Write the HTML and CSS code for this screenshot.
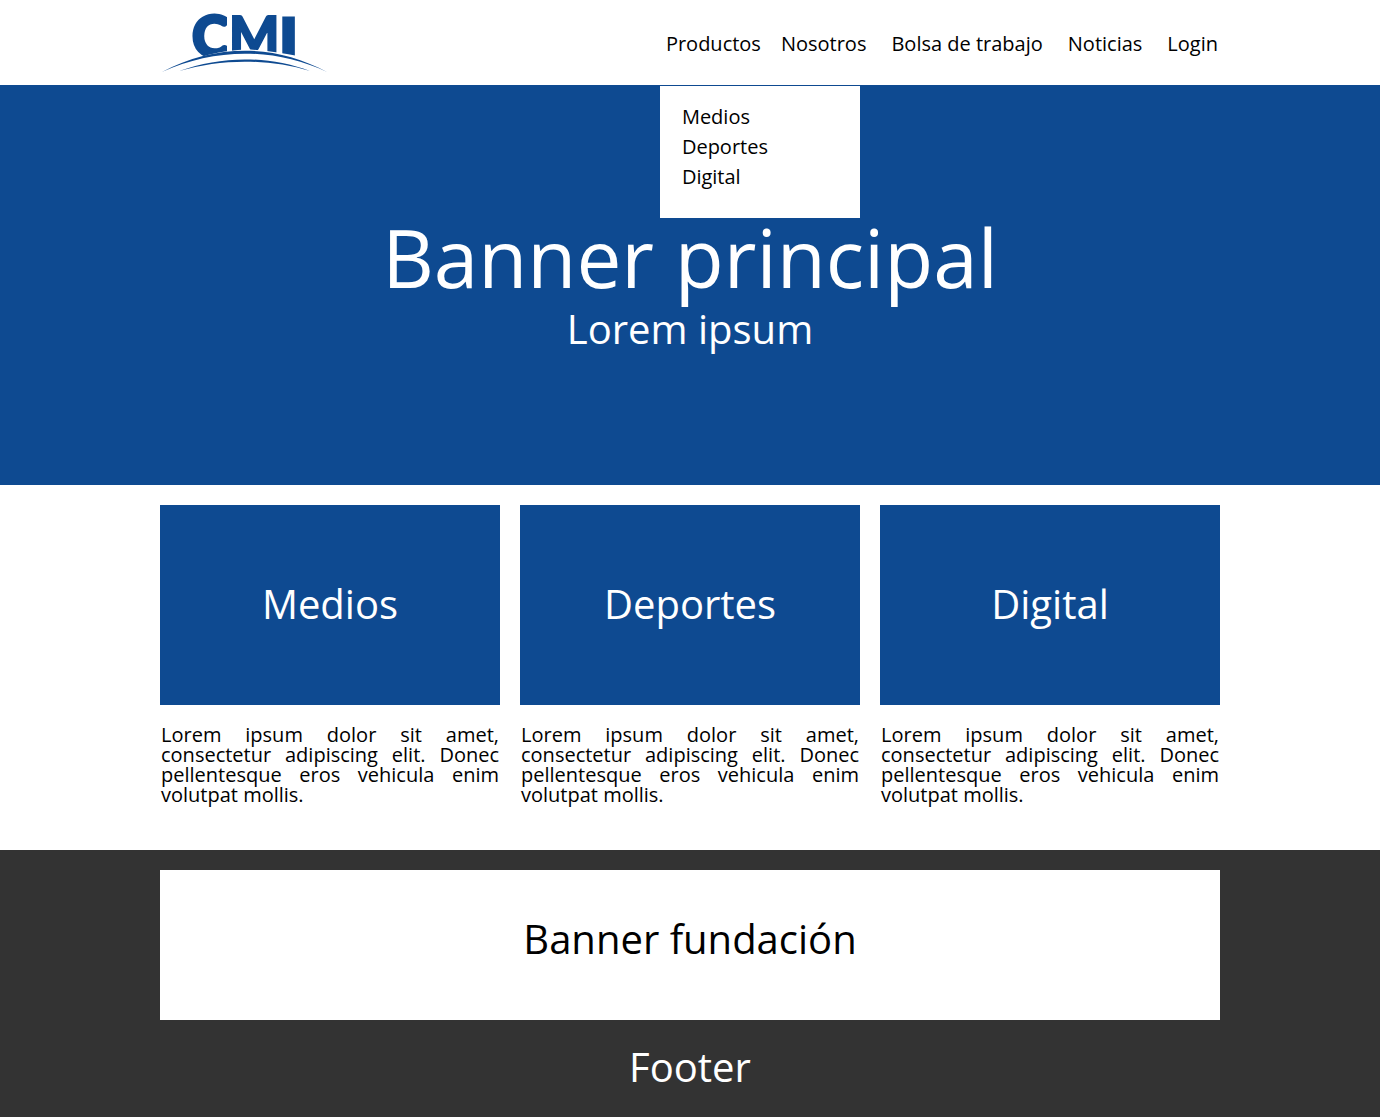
FILE: index.html
```html
<!DOCTYPE html>
<html lang="es">
<head>
<meta charset="utf-8">
<meta name="viewport" content="width=device-width, initial-scale=1">
<title>CMI</title>
<link rel="stylesheet" href="styles.css">
</head>
<body>
<header class="header">
  <div class="container header-row">
    <a class="logo" href="#" aria-label="CMI">
      <svg width="170" height="74" viewBox="160 5 170 74" aria-hidden="true">
        <text class="logo-text" y="56 54 54" x="192 229 281"><tspan class="logo-c">C</tspan><tspan>M</tspan><tspan class="logo-i">I</tspan></text>
        <path fill="#fff" d="M227 10H232V60H227ZM278 10H281V60H278ZM160 74C186 60 206 51 245 48.500C262 48.500 280 52 298 55L330 74Z"/>
        <path d="M162 71C215 42.500 275 42.500 327 71C275 46.500 215 46.500 162 71Z"/>
        <path d="M179 70C222 54.500 268 54.500 310 70C268 57.500 222 57.500 179 70Z"/>
      </svg>
    </a>
    <nav class="nav">
      <ul class="menu">
        <li class="menu-group">
          <a href="#productos">Productos</a>
          <ul class="submenu">
            <li><a href="#medios">Medios</a></li>
            <li><a href="#deportes">Deportes</a></li>
            <li><a href="#digital">Digital</a></li>
          </ul>
        </li>
        <li><a href="#nosotros">Nosotros</a></li>
        <li><a href="#bolsa">Bolsa de trabajo</a></li>
        <li><a href="#noticias">Noticias</a></li>
        <li><a href="#login">Login</a></li>
      </ul>
    </nav>
  </div>
</header>
<main>
  <section class="hero" id="productos">
    <h1>Banner principal</h1>
    <p class="title">Lorem ipsum</p>
  </section>
  <section class="container cards">
    <article id="medios">
      <h2 class="card-banner title">Medios</h2>
      <p class="card-text">Lorem ipsum dolor sit amet, consectetur adipiscing elit. Donec pellentesque eros vehicula enim volutpat mollis.</p>
    </article>
    <article id="deportes">
      <h2 class="card-banner title">Deportes</h2>
      <p class="card-text">Lorem ipsum dolor sit amet, consectetur adipiscing elit. Donec pellentesque eros vehicula enim volutpat mollis.</p>
    </article>
    <article id="digital">
      <h2 class="card-banner title">Digital</h2>
      <p class="card-text">Lorem ipsum dolor sit amet, consectetur adipiscing elit. Donec pellentesque eros vehicula enim volutpat mollis.</p>
    </article>
  </section>
</main>
<footer class="footer">
  <div class="container">
    <h2 class="foundation title">Banner fundación</h2>
    <p class="footer-text title">Footer</p>
  </div>
</footer>
</body>
</html>
```
FILE: styles.css
```css
* {
  box-sizing: border-box;
}

body {
  display: flex;
  flex-direction: column;
  min-height: 100vh;
  margin: 0;
  background: #fff;
  color: #000;
  font: 20px/30px "Open Sans", sans-serif;
}

h1,
h2,
p,
ul {
  margin: 0;
  padding: 0;
  font-weight: 400;
}

ul {
  list-style: none;
}

a {
  color: inherit;
  text-decoration: none;
}

.container {
  width: 100%;
  max-width: 1060px;
  margin: 0 auto;
}

.header-row {
  display: flex;
  align-items: center;
  justify-content: space-between;
  min-height: 85px;
}

.logo svg {
  display: block;
  overflow: visible;
  fill: #0e4a91;
}

.logo-text {
  font: 900 53px Lato, sans-serif;
  stroke: #0e4a91;
  stroke-width: 2px;
}

.logo-c {
  font-size: 57px;
  stroke-width: 3px;
}

.logo-i {
  font-size: 50px;
  stroke-width: 5px;
}

.nav {
  padding-top: 3px;
}

.menu {
  display: flex;
  gap: 20px;
}

.menu > li + li {
  padding-right: 2px;
}

.menu > li + li + li {
  padding-left: 3px;
}

.menu-group {
  position: relative;
}

/* Opens just under the header */
.submenu {
  position: absolute;
  top: 57px;
  left: -6px;
  width: 200px;
  padding: 16px 22px 26px;
  background: #fff;
}

.title {
  font-size: 40px;
  line-height: 40px;
}

.hero {
  display: flex;
  flex-direction: column;
  align-items: center;
  justify-content: center;
  gap: 12px;
  min-height: 400px;
  padding-bottom: 4px;
  background: #0e4a91;
  color: #fff;
}

h1 {
  font-size: 80px;
  line-height: 80px;
}

.cards {
  display: grid;
  grid-template-columns: repeat(3, 1fr);
  gap: 20px;
  padding: 20px 0 45px;
}

.card-banner {
  display: flex;
  align-items: center;
  justify-content: center;
  min-height: 200px;
  margin-bottom: 20px;
  padding-bottom: 2px;
  background: #0e4a91;
  color: #fff;
}

.card-text {
  padding: 0 1px;
  line-height: 20px;
  text-align: justify;
}

.footer {
  flex: 1;
  padding: 20px 0 30px;
  background: #333;
  color: #fff;
  text-align: center;
}

.foundation {
  padding: 49px 20px 61px;
  background: #fff;
  color: #000;
}

.footer-text {
  padding-top: 27px;
}
```
